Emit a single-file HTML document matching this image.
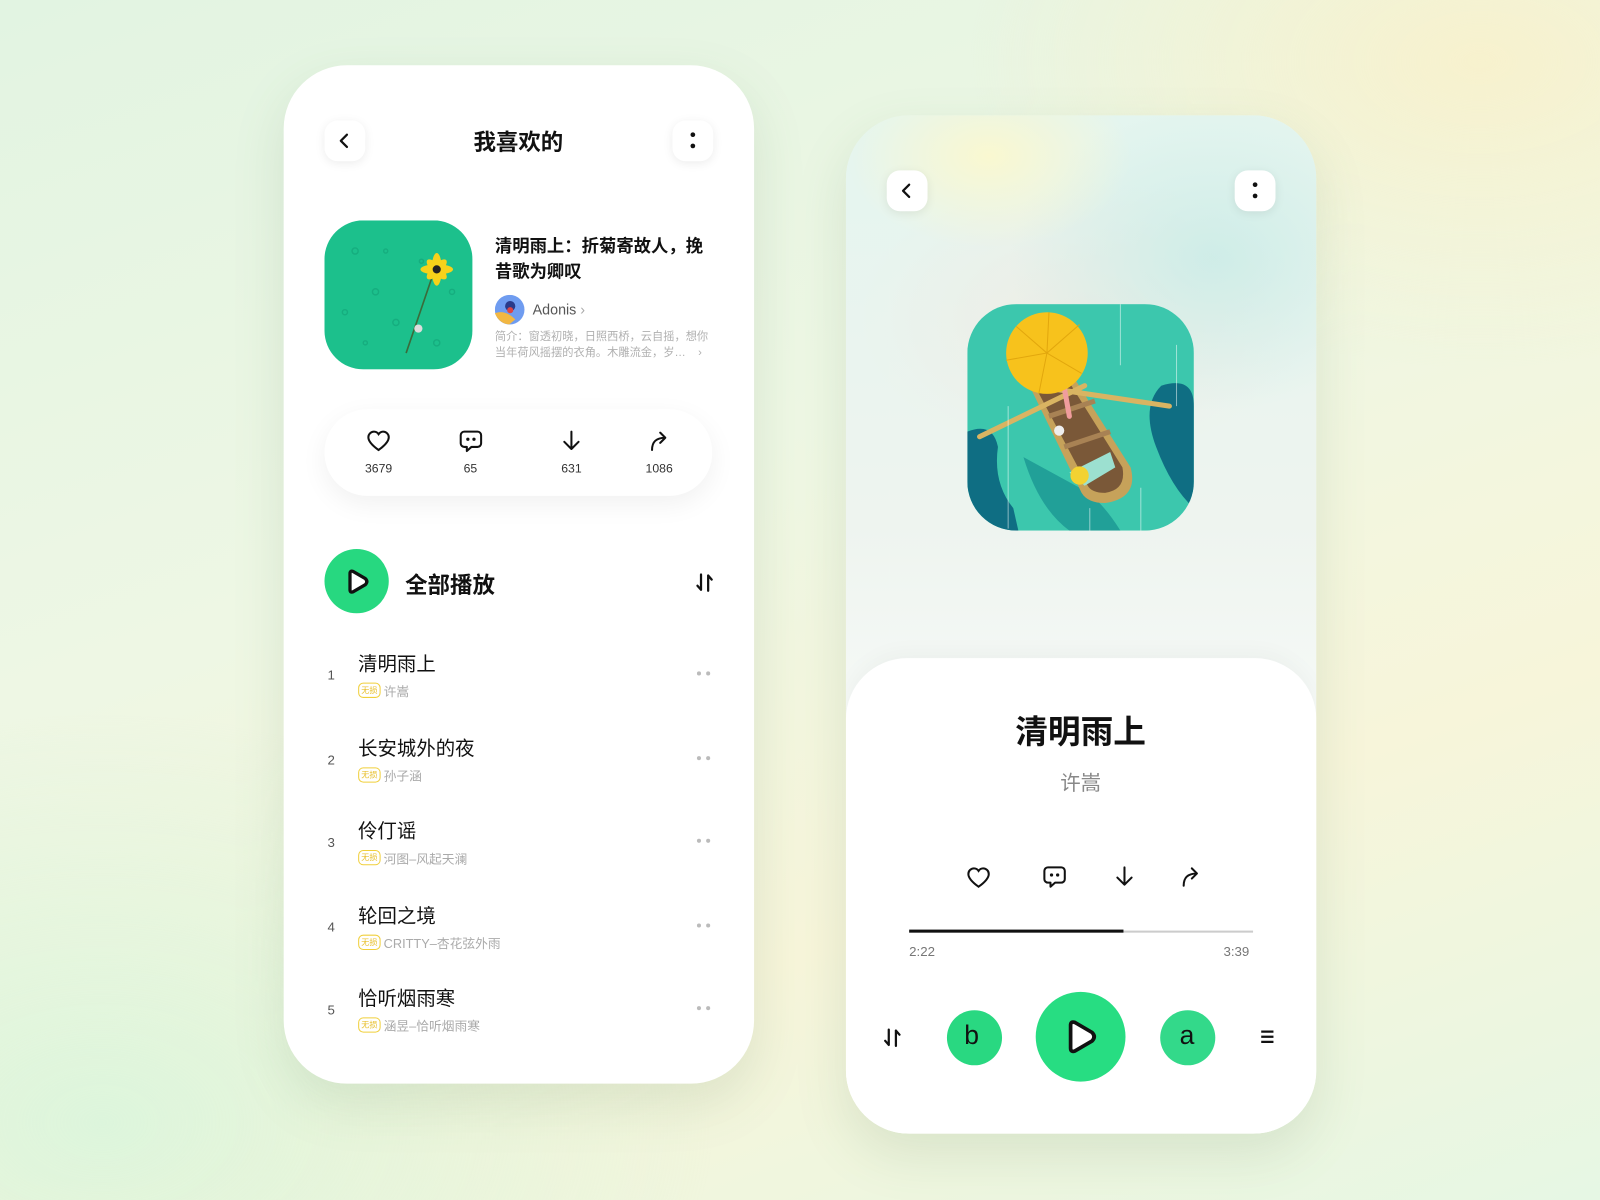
<!DOCTYPE html>
<html><head><meta charset="utf-8">
<style>
*{margin:0;padding:0;box-sizing:border-box}
html,body{width:1600px;height:1200px;overflow:hidden}
body{background:linear-gradient(160deg,#e2f4e2 0%,#eef7e4 40%,#f7f5da 70%,#e6f7e4 100%);font-family:"Liberation Sans","Noto Sans CJK SC",sans-serif;color:#111}
#w{position:absolute;left:0;top:0;width:1568px;height:1176px;transform:scale(1.0204);transform-origin:0 0;
background:radial-gradient(ellipse 500px 300px at 1450px 60px,rgba(250,240,200,.8),transparent),radial-gradient(ellipse 600px 400px at 100px 1100px,rgba(210,245,220,.7),transparent)}
.a{position:absolute}
.card{position:absolute;width:461px;height:998px;border-radius:62px;background:#fff;box-shadow:0 20px 50px rgba(90,130,90,.15);overflow:hidden}
.btn{position:absolute;width:40px;height:40px;border-radius:13px;background:#fff;box-shadow:0 2px 10px rgba(0,0,0,.08);display:flex;align-items:center;justify-content:center}
.row .n{position:absolute;left:-30px;font-size:13px;color:#555}
.t{font-size:19px;color:#111;white-space:nowrap}
.s{font-size:12.5px;color:#aaa;white-space:nowrap;display:flex;align-items:center}
.bd{display:inline-block;border:1.2px solid #f0cf3a;color:#e8c030;border-radius:5px;font-size:8px;padding:0 2px;height:15px;line-height:13px;margin-right:3px}
.dots{position:absolute;left:683px;font-size:0}
.dots i{display:inline-block;width:4px;height:4px;border-radius:50%;background:#bbb;margin-right:5px}
.num{position:absolute;font-size:12px;color:#333;transform:translateX(-50%)}
</style></head><body>
<div id="w">
<!-- LEFT CARD -->
<div class="card" style="left:278px;top:64px"></div>
<div class="btn" style="left:318px;top:118px"><svg width="16" height="16" viewBox="0 0 16 16"><path d="M10 2L4 8l6 6" fill="none" stroke="#111" stroke-width="2.2" stroke-linecap="round" stroke-linejoin="round"/></svg></div>
<div class="a" style="left:408px;top:122px;width:200px;text-align:center;font-size:22px;font-weight:bold">我喜欢的</div>
<div class="btn" style="left:659px;top:118px"><svg width="6" height="20"><circle cx="3" cy="4" r="2.3" fill="#111"/><circle cx="3" cy="15" r="2.3" fill="#111"/></svg></div>
<svg class="a" style="left:318px;top:216px" width="145" height="146" viewBox="0 0 145 146">
<defs><clipPath id="c1"><rect width="145" height="146" rx="38"/></clipPath></defs>
<g clip-path="url(#c1)"><rect width="145" height="146" fill="#1cc08c"/>
<g fill="none" stroke="#14a679" stroke-width="1.4" opacity=".7"><circle cx="30" cy="30" r="3"/><circle cx="50" cy="70" r="3"/><circle cx="20" cy="90" r="2.5"/><circle cx="70" cy="100" r="3"/><circle cx="110" cy="120" r="3"/><circle cx="60" cy="30" r="2"/><circle cx="125" cy="70" r="2.5"/><circle cx="40" cy="120" r="2"/><circle cx="95" cy="40" r="2"/></g>
<path d="M108 48 L80 130" stroke="#3a6b3b" stroke-width="1.6"/>
<g fill="#f6d21a"><ellipse cx="110" cy="48" rx="16" ry="5"/><ellipse cx="110" cy="48" rx="5" ry="16"/><ellipse cx="110" cy="48" rx="13" ry="5" transform="rotate(45 110 48)"/><ellipse cx="110" cy="48" rx="13" ry="5" transform="rotate(-45 110 48)"/></g>
<circle cx="110" cy="48" r="4" fill="#222"/><circle cx="92" cy="106" r="4" fill="#ddd"/></g></svg>
<div class="a" style="left:485px;top:229px;width:220px;font-size:17px;font-weight:bold;line-height:25px">清明雨上：折菊寄故人，挽昔歌为卿叹</div>
<svg class="a" style="left:485px;top:289px" width="29" height="29"><circle cx="14.5" cy="14.5" r="14.5" fill="#6f9cf0"/><path d="M0 18 Q10 14 20 24 L14 29 Q4 28 0 18Z" fill="#f2b742"/><circle cx="15" cy="11" r="5" fill="#2a3a8a"/><circle cx="15" cy="15" r="3" fill="#d44"/></svg>
<div class="a" style="left:522px;top:295px;font-size:14px;color:#555">Adonis <span style="color:#aaa">›</span></div>
<div class="a" style="left:485px;top:322px;width:222px;font-size:11px;color:#b0b0b0;line-height:16px;white-space:nowrap">简介：窗透初晓，日照西桥，云自摇，想你<br>当年荷风摇摆的衣角。木雕流金，岁…&nbsp;&nbsp;&nbsp;&nbsp;›</div>
<div class="a" style="left:318px;top:401px;width:380px;height:85px;border-radius:42px;background:#fff;box-shadow:0 8px 26px rgba(0,0,0,.06)"></div>
<svg class="a" style="left:359px;top:421px" width="24" height="22" viewBox="0 0 24 22"><path d="M12 20C5 15 2 11 2 7.5 2 4.5 4.5 2 7.5 2 9.5 2 11 3 12 4.5 13 3 14.5 2 16.5 2 19.5 2 22 4.5 22 7.5 22 11 19 15 12 20Z" fill="none" stroke="#111" stroke-width="2"/></svg>
<svg class="a" style="left:450px;top:421px" width="23" height="23" viewBox="0 0 23 23"><path d="M5 2h13a3.5 3.5 0 0 1 3.5 3.5v8A3.5 3.5 0 0 1 18 17H12l-4.5 4V17H5A3.5 3.5 0 0 1 1.5 13.5v-8A3.5 3.5 0 0 1 5 2Z" fill="none" stroke="#111" stroke-width="2" stroke-linejoin="round"/><circle cx="8.5" cy="9.5" r="1.6" fill="#111"/><circle cx="14.5" cy="9.5" r="1.6" fill="#111"/></svg>
<svg class="a" style="left:550px;top:421px" width="20" height="22" viewBox="0 0 20 22"><path d="M10 2v17M3 12l7 7 7-7" fill="none" stroke="#111" stroke-width="2" stroke-linecap="round" stroke-linejoin="round"/></svg>
<svg class="a" style="left:636px;top:421px" width="20" height="22" viewBox="0 0 20 22"><path d="M3 20C3 12 7 8 16 8M11 3l5 5-5 5" fill="none" stroke="#111" stroke-width="2" stroke-linecap="round" stroke-linejoin="round"/></svg>
<div class="num" style="left:371px;top:452px">3679</div>
<div class="num" style="left:461px;top:452px">65</div>
<div class="num" style="left:560px;top:452px">631</div>
<div class="num" style="left:646px;top:452px">1086</div>
<div class="a" style="left:318px;top:538px;width:63px;height:63px;border-radius:50%;background:#27d880"></div>
<svg class="a" style="left:335px;top:555px" width="30" height="30" viewBox="0 0 30 30"><path d="M8 7Q8 4 11 5L23 12Q26 15 23 18L11 25Q8 26 8 23Z" fill="#fff" stroke="#111" stroke-width="3.2" stroke-linejoin="round"/></svg>
<div class="a" style="left:397px;top:556px;font-size:22px;font-weight:bold">全部播放</div>
<svg class="a" style="left:682px;top:561px" width="18" height="20" viewBox="0 0 18 20"><path d="M5 2v15M1.5 13l3.5 4M12 18V3M12 3l3.5 4" fill="none" stroke="#111" stroke-width="2.2" stroke-linecap="round"/></svg>

<div class="a row" style="left:351px;top:636px"><div class="n" style="top:18px">1</div><div class="t">清明雨上</div><div class="s" style="margin-top:4px"><span class="bd">无损</span>许嵩</div></div>
<div class="a row" style="left:351px;top:719px"><div class="n" style="top:18px">2</div><div class="t">长安城外的夜</div><div class="s" style="margin-top:4px"><span class="bd">无损</span>孙子涵</div></div>
<div class="a row" style="left:351px;top:800px"><div class="n" style="top:18px">3</div><div class="t">伶仃谣</div><div class="s" style="margin-top:4px"><span class="bd">无损</span>河图–风起天澜</div></div>
<div class="a row" style="left:351px;top:883px"><div class="n" style="top:18px">4</div><div class="t">轮回之境</div><div class="s" style="margin-top:4px"><span class="bd">无损</span>CRITTY–杏花弦外雨</div></div>
<div class="a row" style="left:351px;top:964px"><div class="n" style="top:18px">5</div><div class="t">恰听烟雨寒</div><div class="s" style="margin-top:4px"><span class="bd">无损</span>涵昱–恰听烟雨寒</div></div>
<div class="dots" style="top:658px"><i></i><i></i></div>
<div class="dots" style="top:741px"><i></i><i></i></div>
<div class="dots" style="top:822px"><i></i><i></i></div>
<div class="dots" style="top:905px"><i></i><i></i></div>
<div class="dots" style="top:986px"><i></i><i></i></div>

<!-- RIGHT CARD -->
<div class="card" style="left:829px;top:113px;background:radial-gradient(ellipse 140px 90px at 140px 40px,rgba(252,248,205,.9),transparent),radial-gradient(ellipse 200px 150px at 360px 140px,rgba(200,235,230,.8),transparent),radial-gradient(ellipse 220px 140px at 230px 200px,rgba(238,236,228,.9),transparent),linear-gradient(180deg,#e4f5ef 0%,#eef4ef 40%,#fafcfb 70%,#fff 100%)">
<div class="a" style="left:0;top:532px;width:461px;height:470px;background:#fff;border-radius:60px 60px 0 0;box-shadow:0 -6px 20px rgba(0,0,0,.03)"></div>
</div>
<div class="btn" style="left:869px;top:167px"><svg width="16" height="16" viewBox="0 0 16 16"><path d="M10 2L4 8l6 6" fill="none" stroke="#111" stroke-width="2.2" stroke-linecap="round" stroke-linejoin="round"/></svg></div>
<div class="btn" style="left:1210px;top:167px"><svg width="6" height="20"><circle cx="3" cy="4" r="2.3" fill="#111"/><circle cx="3" cy="15" r="2.3" fill="#111"/></svg></div>
<svg class="a" style="left:948px;top:298px" width="222" height="222" viewBox="0 0 222 222">
<defs><clipPath id="c2"><rect width="222" height="222" rx="48"/></clipPath></defs>
<g clip-path="url(#c2)"><rect width="222" height="222" fill="#3cc7ad"/>
<path d="M0 125 Q25 115 30 140 Q25 175 45 200 L50 222 L0 222Z" fill="#0f6e83"/>
<path d="M190 80 Q222 70 222 100 L222 200 Q200 180 185 140 Q170 100 190 80Z" fill="#0f6e83"/>
<path d="M55 150 Q70 200 100 222 L150 222 Q130 190 110 180Z" fill="#16908e" opacity=".7"/>
<path d="M56 70 Q80 55 100 65 L160 160 Q168 190 135 195 Q118 195 112 185 Z" fill="#c6a25a"/>
<path d="M64 76 Q82 64 97 72 L152 160 Q156 182 135 185 Q122 185 118 178 Z" fill="#7a5838"/>
<path d="M80 110 L125 95 M95 140 L140 125" stroke="#a88254" stroke-width="5"/>
<path d="M12 130 L115 80" stroke="#d9b462" stroke-width="5" stroke-linecap="round"/>
<path d="M90 84 L198 100" stroke="#d9b462" stroke-width="5" stroke-linecap="round"/>
<path d="M95 82 L100 110" stroke="#f09d9d" stroke-width="5" stroke-linecap="round"/>
<circle cx="78" cy="48" r="40" fill="#f7c21c"/>
<path d="M78 48 L48 22 M78 48 L110 20 M78 48 L38 55 M78 48 L112 68 M78 48 L70 88 M78 48 L80 8" stroke="#e2a70d" stroke-width="1"/>
<circle cx="90" cy="124" r="5" fill="#eee"/>
<path d="M100 165 L140 145 L145 160 L115 178Z" fill="#9ce0d0"/>
<circle cx="110" cy="168" r="9" fill="#f3d232"/>
<g stroke="#fff" stroke-width="1" opacity=".5"><path d="M40 100v120M150 0v60M170 180v42M120 200v22M205 40v60"/></g></g></svg>
<div class="a" style="left:959px;top:692px;width:200px;text-align:center;font-size:32px;font-weight:bold">清明雨上</div>
<div class="a" style="left:959px;top:751px;width:200px;text-align:center;font-size:20px;color:#888">许嵩</div>
<svg class="a" style="left:947px;top:849px" width="24" height="22" viewBox="0 0 24 22"><path d="M12 20C5 15 2 11 2 7.5 2 4.5 4.5 2 7.5 2 9.5 2 11 3 12 4.5 13 3 14.5 2 16.5 2 19.5 2 22 4.5 22 7.5 22 11 19 15 12 20Z" fill="none" stroke="#111" stroke-width="2"/></svg>
<svg class="a" style="left:1022px;top:848px" width="23" height="23" viewBox="0 0 23 23"><path d="M5 2h13a3.5 3.5 0 0 1 3.5 3.5v8A3.5 3.5 0 0 1 18 17H12l-4.5 4V17H5A3.5 3.5 0 0 1 1.5 13.5v-8A3.5 3.5 0 0 1 5 2Z" fill="none" stroke="#111" stroke-width="2" stroke-linejoin="round"/><circle cx="8.5" cy="9.5" r="1.6" fill="#111"/><circle cx="14.5" cy="9.5" r="1.6" fill="#111"/></svg>
<svg class="a" style="left:1092px;top:848px" width="20" height="22" viewBox="0 0 20 22"><path d="M10 2v17M3 12l7 7 7-7" fill="none" stroke="#111" stroke-width="2" stroke-linecap="round" stroke-linejoin="round"/></svg>
<svg class="a" style="left:1157px;top:848px" width="20" height="22" viewBox="0 0 20 22"><path d="M3 20C3 12 7 8 16 8M11 3l5 5-5 5" fill="none" stroke="#111" stroke-width="2" stroke-linecap="round" stroke-linejoin="round"/></svg>
<div class="a" style="left:891px;top:912px;width:337px;height:2px;background:#ccc"></div>
<div class="a" style="left:891px;top:911px;width:210px;height:3px;background:#111"></div>
<div class="a" style="left:891px;top:925px;font-size:13px;color:#777">2:22</div>
<div class="a" style="left:1199px;top:925px;font-size:13px;color:#777">3:39</div>
<svg class="a" style="left:866px;top:1007px" width="18" height="20" viewBox="0 0 18 20"><path d="M5 2v15M1.5 13l3.5 4M12 18V3M12 3l3.5 4" fill="none" stroke="#111" stroke-width="2.2" stroke-linecap="round"/></svg>
<div class="a" style="left:928px;top:990px;width:54px;height:54px;border-radius:50%;background:#29d881"></div>
<div class="a" style="left:945px;top:999px;font-size:26px;color:#111">b</div>
<div class="a" style="left:1015px;top:972px;width:88px;height:88px;border-radius:44px;background:#27dd82"></div>
<svg class="a" style="left:1038px;top:995px" width="42" height="42" viewBox="0 0 30 30"><path d="M8 7Q8 4 11 5L23 12Q26 15 23 18L11 25Q8 26 8 23Z" fill="#fff" stroke="#111" stroke-width="2.6" stroke-linejoin="round"/></svg>
<div class="a" style="left:1137px;top:990px;width:54px;height:54px;border-radius:50%;background:#33d98a"></div>
<div class="a" style="left:1156px;top:999px;font-size:26px;color:#111">a</div>
<svg class="a" style="left:1234px;top:1008px" width="16" height="16" viewBox="0 0 16 16"><path d="M2 3h12M2 8h12M2 13h12" stroke="#111" stroke-width="2.2"/></svg>
</div>
</body></html>
